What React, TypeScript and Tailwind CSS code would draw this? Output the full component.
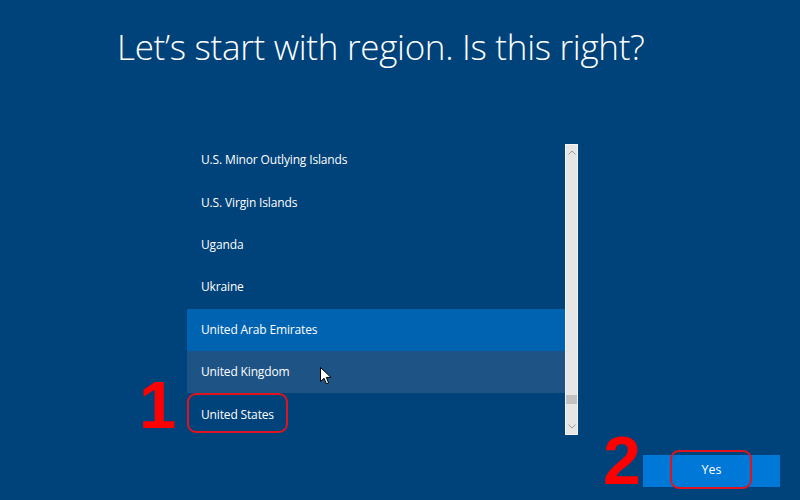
import { Fragment } from "react";

const regions = [
  "U.S. Minor Outlying Islands",
  "U.S. Virgin Islands",
  "Uganda",
  "Ukraine",
  "United Arab Emirates",
  "United Kingdom",
  "United States",
];

function Cursor() {
  return (
    <svg width="12" height="18" viewBox="0 0 12 18" className="absolute left-[133px] top-[16px]">
      <path d="M0.5 0.5 L0.5 14.5 L4 11.2 L6.4 16.8 L8.6 15.9 L6.3 10.4 L11 10.4 Z" fill="#fff" stroke="#000" strokeWidth="1" />
    </svg>
  );
}

function Scrollbar() {
  return (
    <div className="mt-[5px] mb-[1px] flex w-[13px] flex-col border border-[#f4f4f4] bg-[#e6e6e6]">
      <div className="flex h-[14px] items-center justify-center">
        <svg width="8" height="5" viewBox="0 0 8 5">
          <path d="M0.5 4.5 L4 1 L7.5 4.5" fill="none" stroke="#9a9a9a" strokeWidth="1" />
        </svg>
      </div>
      <div className="flex-1" />
      <div className="mb-[16px] h-[9px] bg-[#c2c2c2]" />
      <div className="flex h-[14px] items-center justify-center">
        <svg width="8" height="5" viewBox="0 0 8 5">
          <path d="M0.5 0.5 L4 4 L7.5 0.5" fill="none" stroke="#9a9a9a" strokeWidth="1" />
        </svg>
      </div>
    </div>
  );
}

export default function App() {
  return (
    <div
      className="relative h-[500px] w-[800px] overflow-hidden bg-[#00427a] text-white"
      style={{ fontFamily: '"Open Sans", "Noto Sans", sans-serif' }}
    >
      <h1 className="pl-[117px] pt-[23px] text-[35px] font-light leading-[48px] tracking-[-0.3px]">
        Let’s start with region. Is this right?
      </h1>

      <div className="ml-[187px] mt-[68px] flex w-[391px]">
        <ul className="flex-1">
          {regions.map((r, i) => (
            <Fragment key={r}>
              <li
                className={
                  "relative flex h-[42.4px] items-center pl-[14px] text-[12px] tracking-[-0.15px] " +
                  (i === 4 ? "bg-[#0063b1]" : i === 5 ? "bg-[#1e5385]" : "")
                }
              >
                {r}
                {i === 5 && <Cursor />}
              </li>
            </Fragment>
          ))}
        </ul>
        <Scrollbar />
      </div>

      <div className="mt-[19px] flex justify-end pr-[20px]">
        <button className="h-[32px] w-[137px] bg-[#0078d7] text-[12.5px] text-white">Yes</button>
      </div>

      {/* annotations */}
      <div className="absolute left-[187px] top-[393px] h-[40px] w-[101px] rounded-[9px] border-2 border-[#e0141e]" />
      <div className="absolute left-[670px] top-[450px] h-[39px] w-[82px] rounded-[9px] border-2 border-[#e0141e]" />
      <div
        className="absolute left-[139px] top-[371px] text-[67px] font-bold leading-none text-[#ff0000]"
        style={{ fontFamily: '"Liberation Sans", Arial, sans-serif' }}
      >
        1
      </div>
      <div
        className="absolute left-[603px] top-[426px] text-[68px] font-bold leading-none text-[#ff0000]"
        style={{ fontFamily: '"Liberation Sans", Arial, sans-serif' }}
      >
        2
      </div>
    </div>
  );
}
